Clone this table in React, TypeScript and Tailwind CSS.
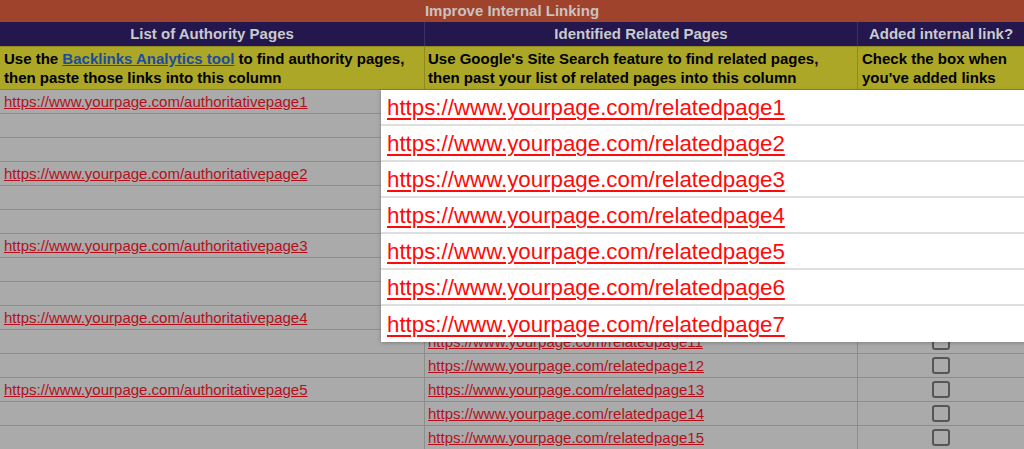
import React from "react"

const AUTHORITY: Record<number, string> = {
  0: "https://www.yourpage.com/authoritativepage1",
  3: "https://www.yourpage.com/authoritativepage2",
  6: "https://www.yourpage.com/authoritativepage3",
  9: "https://www.yourpage.com/authoritativepage4",
  12: "https://www.yourpage.com/authoritativepage5",
}

// rows 1-10 sit under the pasted list, only 11+ show through
const ROWS = Array.from({ length: 15 }, (_, i) => ({
  authority: AUTHORITY[i] || "",
  related: i >= 10 ? `https://www.yourpage.com/relatedpage${i + 1}` : "",
  checkbox: i >= 10,
}))

const POPUP = [1, 2, 3, 4, 5, 6, 7].map((n) => `https://www.yourpage.com/relatedpage${n}`)

function Checkbox() {
  return <span className="block w-[18px] h-[17px] border-2 border-[#565656] rounded-[3px]" />
}

export default function App() {
  return (
    <div className="relative w-[1024px] h-[449px] overflow-hidden bg-[#aaaaaa] font-['Liberation_Sans',Arial,sans-serif] text-[15px] leading-[18px]">
      {/* Title */}
      <div className="h-[22px] bg-[#a0432d] flex items-center justify-center font-bold text-[#c9c2c0]">
        Improve Internal Linking
      </div>

      {/* Column headers */}
      <div className="grid grid-cols-[425px_433px_166px] h-[24px] bg-[#23174e] font-bold text-[#cacacd]">
        <div className="flex items-center justify-center border-r border-[#3a2f66]">List of Authority Pages</div>
        <div className="flex items-center justify-center border-r border-[#3a2f66]">Identified Related Pages</div>
        <div className="flex items-center justify-center">Added internal link?</div>
      </div>

      {/* Instructions */}
      <div className="grid grid-cols-[425px_433px_166px] h-[44px] bg-[#aca726] font-bold text-black leading-[19px] border-y border-[#8f8a1e]">
        <div className="flex flex-col justify-center pl-[4px] border-r border-[#8f8a1e]">
          <span>
            Use the <span className="text-[#1b4c9e] underline">Backlinks Analytics tool</span> to find authority pages,
          </span>
          <span>then paste those links into this column</span>
        </div>
        <div className="flex flex-col justify-center pl-[3px] border-r border-[#8f8a1e]">
          <span>Use Google's Site Search feature to find related pages,</span>
          <span>then past your list of related pages into this column</span>
        </div>
        <div className="flex flex-col justify-center pl-[4px]">
          <span>Check the box when</span>
          <span>you've added links</span>
        </div>
      </div>

      {/* Data rows */}
      {ROWS.map((row, i) => (
        <div key={i} className="grid grid-cols-[425px_433px_166px] h-[24px] border-b border-[#8d8d8d]">
          <div className="flex items-end pb-[2px] pl-[4px] border-r border-[#8d8d8d]">
            {row.authority && <span className="text-[#b3101b] underline">{row.authority}</span>}
          </div>
          <div className="flex items-end pb-[2px] pl-[3px] border-r border-[#8d8d8d]">
            {row.related && <span className="text-[#b3101b] underline">{row.related}</span>}
          </div>
          <div className="flex items-center justify-center">
            {row.checkbox && <Checkbox />}
          </div>
        </div>
      ))}

      {/* Pasted links overlay */}
      <div className="absolute left-[381px] top-[90px] w-[660px] bg-white shadow-[0_1px_4px_rgba(0,0,0,0.25)]">
        {POPUP.map((url, i) => (
          <div
            key={url}
            className={`h-[36px] flex items-center pl-[6px] pt-[2px] ${i < POPUP.length - 1 ? "border-b-2 border-[#dedede]" : ""}`}
          >
            <span className="text-[22.3px] leading-[26px] text-[#ff0a0a] underline decoration-2 underline-offset-[3px]">
              {url}
            </span>
          </div>
        ))}
      </div>
    </div>
  )
}
